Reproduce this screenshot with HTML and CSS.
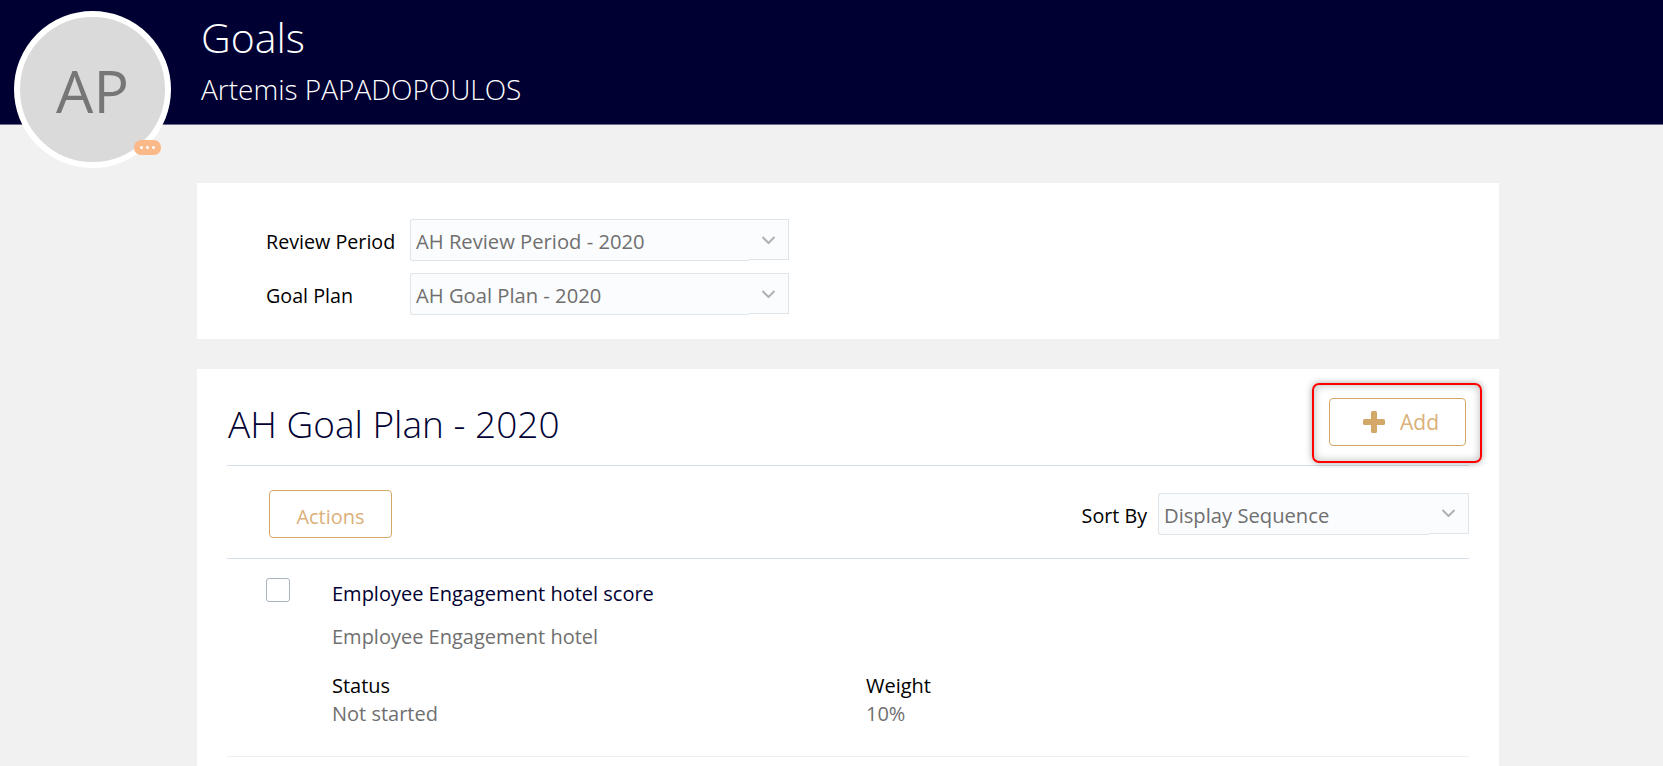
FILE: index.html
```html
<!DOCTYPE html>
<html lang="en">
<head>
<meta charset="UTF-8">
<meta name="viewport" content="width=device-width, initial-scale=1.0">
<title>Goals</title>
<link rel="stylesheet" href="styles.css">
</head>
<body>

<header class="topbar">
<div class="avatar">
<span class="avatar-text">AP</span>
<span class="avatar-badge"><i></i><i></i><i></i></span>
</div>
<h1>Goals</h1>
<div class="person">Artemis PAPADOPOULOS</div>
</header>

<main class="content">
<section class="card filters">
<div class="filter-row">
<label class="filter-label">Review Period</label>
<div class="select select-wide">
<span class="select-value">AH Review Period - 2020</span>
<span class="select-arrow"><svg class="chevron" viewBox="0 0 14 8"><path d="M1 1l6 6 6-6"/></svg></span>
</div>
</div>
<div class="filter-row">
<label class="filter-label">Goal Plan</label>
<div class="select select-wide">
<span class="select-value">AH Goal Plan - 2020</span>
<span class="select-arrow"><svg class="chevron" viewBox="0 0 14 8"><path d="M1 1l6 6 6-6"/></svg></span>
</div>
</div>
</section>

<section class="card plan">
<div class="plan-head">
<h2>AH Goal Plan - 2020</h2>
<div class="add-wrap">
<button class="btn btn-add">
<svg class="plus" viewBox="0 0 22 22"><rect x="8" width="6" height="22" rx="1.5"/><rect y="8" width="22" height="6" rx="1.5"/></svg>
Add
</button>
<div class="highlight"></div>
</div>
</div>

<div class="toolbar">
<button class="btn btn-actions">Actions</button>
<div class="sort">
<label class="sort-label">Sort By</label>
<div class="select select-sort">
<span class="select-value">Display Sequence</span>
<span class="select-arrow"><svg class="chevron" viewBox="0 0 14 8"><path d="M1 1l6 6 6-6"/></svg></span>
</div>
</div>
</div>

<div class="goal">
<div class="checkbox"></div>
<div class="goal-body">
<div class="goal-title">Employee Engagement hotel score</div>
<div class="goal-desc">Employee Engagement hotel</div>
<div class="goal-meta">
<div class="meta-col">
<div class="meta-label">Status</div>
<div class="meta-value">Not started</div>
</div>
<div class="meta-col">
<div class="meta-label">Weight</div>
<div class="meta-value">10%</div>
</div>
</div>
</div>
</div>
</section>
</main>

</body>
</html>
```

FILE: styles.css
```css
body {
margin: 0;
height: 766px;
overflow: hidden;
background-color: #f1f1f1;
font-family: "Open Sans", Arial, sans-serif;
font-size: 20px;
line-height: 27px;
color: #000;
}
.topbar {
position: relative;
height: 124px;
padding-left: 201px;
background-color: #000033;
color: #fff;
border-bottom: 1px solid #6a6a8a;
}
.topbar h1 {
margin: 0;
padding-top: 10px;
font-size: 41px;
line-height: 54px;
font-weight: 300;
}
.person {
margin-top: 9px;
font-size: 28px;
line-height: 33px;
font-weight: 300;
}
.avatar {
position: absolute;
left: 14px;
top: 11px;
width: 145px;
height: 145px;
border: 6px solid #fff;
border-radius: 50%;
background-color: #dadada;
display: flex;
align-items: center;
justify-content: center;
}
.avatar-text {
font-size: 59px;
line-height: 70px;
color: #767676;
}
.avatar-badge {
position: absolute;
right: 4px;
bottom: 7px;
width: 27px;
height: 15px;
border-radius: 7px;
background-color: #fbb98a;
display: flex;
align-items: center;
justify-content: center;
gap: 3px;
}
.avatar-badge i {
width: 3px;
height: 3px;
border-radius: 50%;
background-color: #fff;
}
.content {
width: 1302px;
margin: 58px 0 0 197px;
}
.card {
background-color: #fff;
}
.filters {
height: 156px;
padding: 36px 0 0 69px;
box-sizing: border-box;
display: flex;
flex-direction: column;
gap: 12px;
}
.filter-row {
display: flex;
align-items: center;
}
.filter-label {
width: 144px;
padding-top: 2px;
font-size: 19.7px;
}
.select {
display: flex;
align-items: flex-start;
color: #6f6f6f;
}
.select-wide {
width: 379px;
}
.select-sort {
width: 311px;
}
.select-value {
flex: 1;
box-sizing: border-box;
height: 42px;
padding: 8px 0 0 5px;
background-color: #fbfcfe;
border: 1px solid #dfe4e8;
border-right: none;
border-radius: 3px 0 0 3px;
font-size: 20.2px;
}
.select-arrow {
display: flex;
align-items: center;
justify-content: center;
box-sizing: border-box;
width: 40px;
height: 41px;
background-color: #fbfcfe;
border: 1px solid #dfe4e8;
border-left: none;
}
.chevron {
width: 15px;
height: 8px;
fill: none;
stroke: #b0b0b0;
stroke-width: 2;
}
.plan {
margin-top: 30px;
padding: 0 30px;
height: 400px;
}
.plan-head {
display: flex;
align-items: flex-start;
justify-content: space-between;
height: 96px;
border-bottom: 1px solid #d5dee8;
}
.plan-head h2 {
margin: 0;
padding: 30px 0 0 1px;
font-size: 37px;
line-height: 50px;
font-weight: 300;
color: #000033;
}
.add-wrap {
position: relative;
margin: 29px 3px 0 0;
}
.btn {
box-sizing: border-box;
background-color: #fff;
border: 1px solid #d4a864;
border-radius: 4px;
color: #dbb079;
font-family: inherit;
font-size: 20px;
}
.btn-add {
display: flex;
align-items: center;
justify-content: center;
gap: 15px;
width: 137px;
height: 48px;
padding: 0 0 0 7px;
font-size: 21px;
}
.plus {
width: 22px;
height: 22px;
fill: #d4a868;
}
.highlight {
position: absolute;
left: -17px;
top: -15px;
width: 170px;
height: 80px;
box-sizing: border-box;
border: 2px solid #ff0000;
border-radius: 7px;
box-shadow: 0 0 7px rgba(0, 0, 0, 0.35), inset 0 0 9px rgba(0, 0, 0, 0.28);
}
.toolbar {
display: flex;
align-items: center;
justify-content: space-between;
box-sizing: border-box;
height: 93px;
padding: 3px 0 0 42px;
border-bottom: 1px solid #d5dee8;
}
.btn-actions {
width: 123px;
height: 48px;
padding-top: 6px;
}
.sort {
display: flex;
align-items: center;
gap: 11px;
}
.sort-label {
padding-top: 4px;
font-size: 19.7px;
}
.goal {
display: flex;
height: 198px;
box-sizing: border-box;
padding: 19px 0 0 39px;
border-bottom: 1px solid #eeeeee;
}
.checkbox {
width: 24px;
height: 24px;
box-sizing: border-box;
border: 1px solid #aab4c0;
border-radius: 3px;
background-color: #fff;
}
.goal-body {
margin-left: 42px;
flex: 1;
}
.goal-title {
margin-top: 2px;
color: #000033;
}
.goal-desc {
margin-top: 16px;
color: #6f6f6f;
}
.goal-meta {
display: flex;
margin-top: 22px;
}
.meta-col {
width: 534px;
}
.meta-value {
margin-top: 1px;
color: #6f6f6f;
}
```
